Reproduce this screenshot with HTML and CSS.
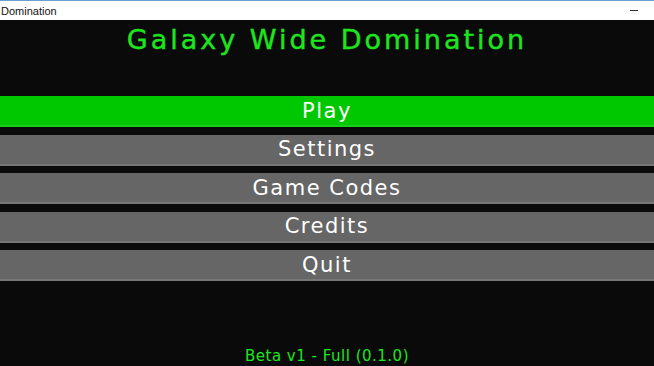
FILE: index.html
```html
<!DOCTYPE html>
<html lang="en">
<head>
  <meta charset="UTF-8">
  <meta name="viewport" content="width=device-width, initial-scale=1.0">
  <title>Galaxy Wide Domination</title>
  <link rel="stylesheet" href="styles.css">
</head>
<body>

  <!-- Window title bar -->
  <div class="title-bar">
    <div class="window-title">Domination</div>
    <div class="window-controls">
      <span class="minimize"></span>
    </div>
  </div>

  <!-- Main Menu -->
  <div class="main-content">
    <h1 class="game-title">Galaxy Wide Domination</h1>

    <div class="menu">
      <button class="menu-button active">Play</button>
      <button class="menu-button">Settings</button>
      <button class="menu-button">Game Codes</button>
      <button class="menu-button">Credits</button>
      <button class="menu-button">Quit</button>
    </div>

    <div class="version">Beta v1 - Full (0.1.0)</div>
  </div>

</body>
</html>
```

FILE: styles.css
```css
* {
  margin: 0;
  padding: 0;
  box-sizing: border-box;
}

html, body {
  height: 100%;
}

body {
  background-color: #0a0a0a;
  display: flex;
  flex-direction: column;
  overflow: hidden;
  font-family: "DejaVu Sans", sans-serif;
}

.title-bar {
  height: 20px;
  flex-shrink: 0;
  background-color: white;
  border-top: 1px solid #6a9fd4;
  display: flex;
  justify-content: space-between;
  align-items: center;
  overflow: hidden;
}

.window-title {
  font-family: "Liberation Sans", sans-serif;
  font-size: 11px;
  color: #111;
  margin-left: 1px;
}

.window-controls {
  width: 40px;
  display: flex;
  justify-content: center;
}

.minimize {
  display: block;
  width: 8px;
  height: 1px;
  background-color: #333;
}

.main-content {
  flex: 1;
  display: flex;
  flex-direction: column;
  padding-top: 5px;
}

.game-title {
  text-align: center;
  color: #1ee61e;
  font-size: 27px;
  font-weight: normal;
  letter-spacing: 3px;
  line-height: 30px;
  -webkit-text-stroke: 0.4px #1ee61e;
}

.menu {
  margin-top: 41px;
  display: flex;
  flex-direction: column;
  gap: 7.5px;
}

.menu-button {
  height: 31px;
  background-color: #666666;
  border: none;
  border-bottom: 2px solid #777777;
  color: white;
  font-family: inherit;
  font-size: 21px;
  letter-spacing: 1.5px;
  line-height: 28px;
  text-align: center;
}

.menu-button.active {
  background-color: #00c800;
  border-bottom-color: #18d018;
}

.version {
  margin-top: auto;
  text-align: center;
  color: #1ee61e;
  font-size: 15px;
  letter-spacing: 0.5px;
  line-height: 18px;
  padding-bottom: 1px;
}
```
